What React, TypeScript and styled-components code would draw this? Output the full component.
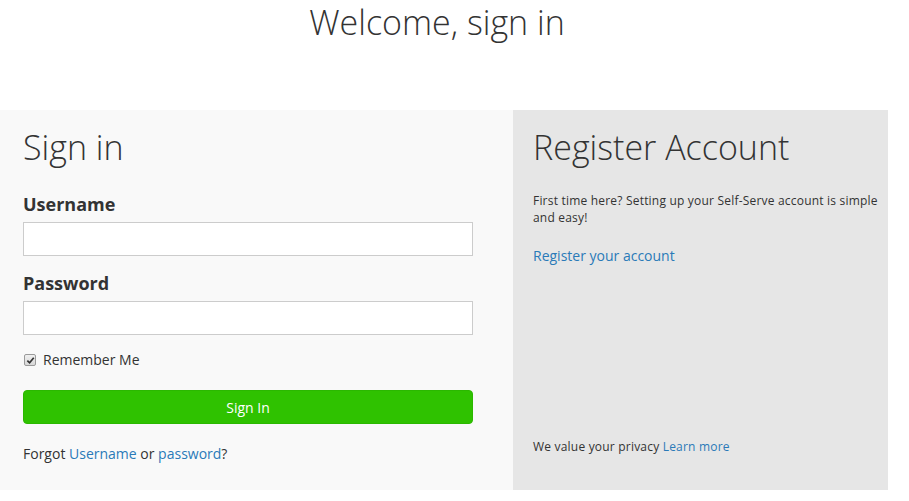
import React from 'react';
import styled, { createGlobalStyle } from 'styled-components';

const GlobalStyle = createGlobalStyle`
  body {
    margin: 0;
    background: #FFFFFF;
    font-family: 'Open Sans', 'Liberation Sans', sans-serif;
    color: #333333;
  }
`;

export default function App() {
  return (
    <>
      <GlobalStyle />
      <Page>
        <PageTitle>Welcome, sign in</PageTitle>
        <Columns>
          <SignInPanel>
            <PanelTitle>Sign in</PanelTitle>
            <form onSubmit={(event) => event.preventDefault()}>
              <Field>
                <Label htmlFor="username">Username</Label>
                <TextInput id="username" type="text" />
              </Field>
              <Field>
                <Label htmlFor="password">Password</Label>
                <TextInput id="password" type="password" />
              </Field>
              <CheckRow>
                <HiddenCheckbox type="checkbox" defaultChecked />
                <CheckBox>
                  <svg width="9" height="9" viewBox="0 0 10 10" aria-hidden="true">
                    <path d="M1.5 5.2 L4 7.6 L8.6 2" fill="none" stroke="#333333" strokeWidth="1.9" />
                  </svg>
                </CheckBox>
                Remember Me
              </CheckRow>
              <SubmitButton type="submit">Sign In</SubmitButton>
            </form>
            <Forgot>
              Forgot <Link href="#">Username</Link> or <Link href="#">password</Link>?
            </Forgot>
          </SignInPanel>
          <RegisterPanel>
            <PanelTitle>Register Account</PanelTitle>
            <Intro>First time here? Setting up your Self-Serve account is simple and easy!</Intro>
            <RegisterLink href="#">Register your account</RegisterLink>
            <Privacy>
              We value your privacy <Link href="#">Learn more</Link>
            </Privacy>
          </RegisterPanel>
        </Columns>
      </Page>
    </>
  );
}

const Page = styled.div`
  width: 888px;
`;

const PageTitle = styled.h1`
  height: 110px;
  margin: 0;
  padding-right: 14px;
  font-weight: 300;
  font-size: 34px;
  line-height: 44px;
  text-align: center;
  color: #333333;
`;

const Columns = styled.div`
  display: grid;
  grid-template-columns: 513px 375px;
  height: 380px;
`;

const SignInPanel = styled.section`
  padding: 15px 40px 0 23px;
  background: #F9F9F9;
`;

const RegisterPanel = styled.section`
  display: flex;
  flex-direction: column;
  align-items: flex-start;
  padding: 15px 4px 33px 20px;
  background: #E6E6E6;
`;

const PanelTitle = styled.h2`
  margin: 0 0 23px;
  font-weight: 300;
  font-size: 34px;
  line-height: 44px;
  color: #333333;
`;

const Field = styled.div`
  margin-bottom: 15px;
`;

const Label = styled.label`
  display: block;
  margin-bottom: 6px;
  font-weight: 700;
  font-size: 18px;
  line-height: 24px;
  color: #333333;
`;

const TextInput = styled.input`
  box-sizing: border-box;
  display: block;
  width: 100%;
  height: 34px;
  padding: 6px 12px;
  border: 1px solid #CCCCCC;
  border-radius: 0;
  background: #FFFFFF;
  font: inherit;
  font-size: 14px;
`;

const CheckRow = styled.label`
  display: flex;
  align-items: center;
  gap: 7px;
  margin-top: 2px;
  font-size: 14px;
  line-height: 20px;
  color: #333333;
  cursor: pointer;
`;

const HiddenCheckbox = styled.input`
  position: absolute;
  opacity: 0;
  width: 0;
  height: 0;
  margin: 0;
`;

const CheckBox = styled.span`
  box-sizing: border-box;
  display: inline-flex;
  align-items: center;
  justify-content: center;
  width: 12px;
  height: 12px;
  margin-left: 1px;
  border: 1px solid #9A9A9A;
  border-radius: 2px;
  background: linear-gradient(#F0F0F0, #D8D8D8);
`;

const SubmitButton = styled.button`
  display: block;
  width: 100%;
  height: 34px;
  margin-top: 20px;
  border: 1px solid #2BB800;
  border-radius: 4px;
  background: #2FC200;
  font-family: inherit;
  font-size: 14px;
  color: #FFFFFF;
  cursor: pointer;
`;

const Forgot = styled.p`
  margin: 20px 0 0;
  font-size: 14px;
  line-height: 20px;
  color: #333333;
`;

const Link = styled.a`
  color: #2A7AB8;
  text-decoration: none;
`;

const Intro = styled.p`
  margin: 0 0 20px;
  font-size: 12px;
  line-height: 17px;
  letter-spacing: 0.2px;
  color: #333333;
`;

const RegisterLink = styled(Link)`
  font-size: 14px;
  line-height: 20px;
`;

const Privacy = styled.p`
  margin: auto 0 0;
  font-size: 12px;
  line-height: 20px;
  letter-spacing: 0.2px;
  color: #333333;
`;
